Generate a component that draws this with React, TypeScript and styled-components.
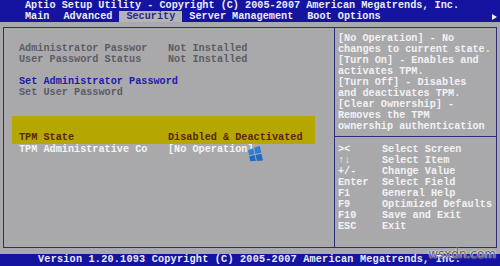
import styled, { createGlobalStyle } from "styled-components";

const GlobalStyle = createGlobalStyle`
  html, body {
    margin: 0;
    padding: 0;
    background: #a9a9ab;
  }
`;

const Screen = styled.div`
  position: relative;
  width: 500px;
  height: 266px;
  overflow: hidden;
  background-color: #a9a9ab;
  font-family: "Liberation Mono", "DejaVu Sans Mono", monospace;
  font-size: 10.2px;
  font-weight: bold;
  display: flex;
  flex-direction: column;
`;

const Header = styled.header`
  background-color: #1414a0;
  color: #ececf8;
  height: 22px;
  display: flex;
  flex-direction: column;
`;

const TitleRow = styled.div`
  height: 11px;
  line-height: 11px;
  padding-left: 25px;
  white-space: pre;
`;

const TabRow = styled.nav`
  height: 11px;
  display: flex;
  align-items: stretch;
  padding-left: 18px;
  padding-right: 3px;
`;

const Tab = styled.span<{ $active?: boolean }>`
  padding: 0 7px;
  line-height: 11px;
  white-space: pre;
  background-color: ${(p) => (p.$active ? "#b4b4b6" : "transparent")};
  color: ${(p) => (p.$active ? "#2a2a90" : "#ececf8")};
`;

const Arrow = styled.span`
  margin-left: auto;
  align-self: center;
  width: 0;
  height: 0;
  border-top: 3px solid transparent;
  border-bottom: 3px solid transparent;
  border-left: 5px solid #ececf8;
`;

const Frame = styled.section`
  margin: 5px 3px 0 3px;
  height: 221px;
  box-sizing: border-box;
  border: 1px solid #2c2c7c;
  display: flex;
`;

const MainPane = styled.div`
  width: 330px;
  border-right: 1px solid #2c2c7c;
  padding-top: 15px;
  display: flex;
  flex-direction: column;
`;

const Row = styled.div<{ $color?: string }>`
  display: grid;
  grid-template-columns: 149px 1fr;
  padding-left: 15px;
  height: 11px;
  line-height: 11px;
  white-space: pre;
  color: ${(p) => p.$color || "#5c5c66"};
`;

const Spacer = styled.div<{ $h: number }>`
  height: ${(p) => p.$h}px;
`;

const Highlight = styled.div`
  margin-left: 8px;
  width: 303px;
  height: 28px;
  background-color: #b6a700;
  display: flex;
  align-items: flex-end;
  padding-bottom: 1px;
  box-sizing: border-box;
  ${Row} {
    padding-left: 7px;
    flex: 1;
  }
`;

const HelpPane = styled.aside`
  flex: 1;
  padding: 5px 3px 0 3px;
  color: #f2f2f4;
  display: flex;
  flex-direction: column;
`;

const HelpLine = styled.div`
  height: 11px;
  line-height: 11px;
  white-space: pre;
`;

const Separator = styled.div`
  margin: 4px -3px 7px -3px;
  border-top: 1px solid #2c2c7c;
`;

const KeyRow = styled.div`
  display: grid;
  grid-template-columns: 44px 1fr;
  height: 11px;
  line-height: 11px;
  white-space: pre;
`;

const Footer = styled.footer`
  margin-top: 6px;
  height: 12px;
  line-height: 12px;
  background-color: #1414a0;
  color: #ececf8;
  padding-left: 38px;
  white-space: pre;
  letter-spacing: 0.2px;
`;

const WinMark = styled.svg`
  position: absolute;
  left: 247px;
  top: 146px;
`;

const SiteMark = styled.span`
  position: absolute;
  right: 4px;
  bottom: 5px;
  font-family: "DejaVu Sans", sans-serif;
  font-weight: normal;
  font-size: 12px;
  color: #5a5a66;
  text-shadow: 0 0 2px #ffffff, 0 0 1px #ffffff;
`;

const tabs = ["Main", "Advanced", "Security", "Server Management", "Boot Options"];

const help = [
  "[No Operation] - No",
  "changes to current state.",
  "[Turn On] - Enables and",
  "activates TPM.",
  "[Turn Off] - Disables",
  "and deactivates TPM.",
  "[Clear Ownership] -",
  "Removes the TPM",
  "ownership authentication",
];

const keys: [string, string][] = [
  ["><", "Select Screen"],
  ["↑↓", "Select Item"],
  ["+/-", "Change Value"],
  ["Enter", "Select Field"],
  ["F1", "General Help"],
  ["F9", "Optimized Defaults"],
  ["F10", "Save and Exit"],
  ["ESC", "Exit"],
];

export default function App() {
  return (
    <>
      <GlobalStyle />
      <Screen>
        <Header>
          <TitleRow>Aptio Setup Utility - Copyright (C) 2005-2007 American Megatrends, Inc.</TitleRow>
          <TabRow>
            {tabs.map((t) => (
              <Tab key={t} $active={t === "Security"}>
                {t}
              </Tab>
            ))}
            <Arrow />
          </TabRow>
        </Header>
        <Frame>
          <MainPane>
            <Row>
              <span>Administrator Passwor</span>
              <span>Not Installed</span>
            </Row>
            <Row>
              <span>User Password Status</span>
              <span>Not Installed</span>
            </Row>
            <Spacer $h={11} />
            <Row $color="#1c1ca8">
              <span>Set Administrator Password</span>
            </Row>
            <Row>
              <span>Set User Password</span>
            </Row>
            <Spacer $h={18} />
            <Highlight>
              <Row $color="#5a2606">
                <span>TPM State</span>
                <span>Disabled &amp; Deactivated</span>
              </Row>
            </Highlight>
            <Row $color="#f4f4f6">
              <span>TPM Administrative Co</span>
              <span>[No Operation]</span>
            </Row>
          </MainPane>
          <HelpPane>
            {help.map((l) => (
              <HelpLine key={l}>{l}</HelpLine>
            ))}
            <Separator />
            {keys.map(([k, d]) => (
              <KeyRow key={k}>
                <span>{k}</span>
                <span>{d}</span>
              </KeyRow>
            ))}
          </HelpPane>
        </Frame>
        <Footer>Version 1.20.1093 Copyright (C) 2005-2007 American Megatrends, Inc.</Footer>
        <WinMark width="16" height="17" viewBox="0 0 16 17">
          <g transform="rotate(-12 8 8.5)">
            <polygon points="2,3 7.5,2 7.5,8 2,8" fill="#2a7fd8" />
            <polygon points="8.5,1.8 14.5,1 14.5,8 8.5,8" fill="#2a7fd8" />
            <polygon points="2,9 7.5,9 7.5,15 2,14" fill="#1f6cc4" />
            <polygon points="8.5,9 14.5,9 14.5,16 8.5,15.2" fill="#1f6cc4" />
          </g>
        </WinMark>
        <SiteMark>wsxdn.com</SiteMark>
      </Screen>
    </>
  );
}
